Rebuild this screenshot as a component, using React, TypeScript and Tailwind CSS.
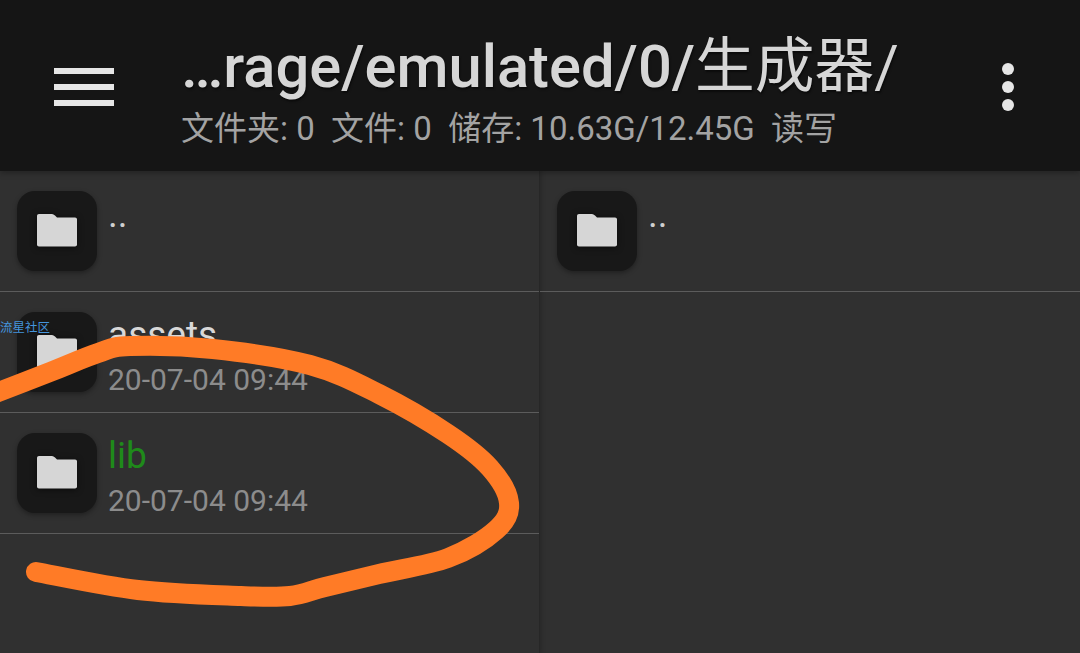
const stroke = [
  [-12, 396], [50, 372], [98, 353], [130, 346], [213, 349], [310, 365], [379, 394], [448, 434], [490, 468],
  [509, 503], [496, 530], [448, 558], [379, 574], [325, 587], [290, 596], [241, 596], [138, 590], [36, 572],
];

function smoothPath(points: number[][]) {
  let d = `M${points[0][0]} ${points[0][1]}`;
  for (let i = 0; i < points.length - 1; i++) {
    const p0 = points[Math.max(0, i - 1)];
    const p1 = points[i];
    const p2 = points[i + 1];
    const p3 = points[Math.min(points.length - 1, i + 2)];
    d += ` C${p1[0] + (p2[0] - p0[0]) / 6} ${p1[1] + (p2[1] - p0[1]) / 6} ${p2[0] - (p3[0] - p1[0]) / 6} ${p2[1] - (p3[1] - p1[1]) / 6} ${p2[0]} ${p2[1]}`;
  }
  return d;
}

function FolderTile() {
  return (
    <div className="flex h-20 w-20 shrink-0 items-center justify-center rounded-[18px] bg-[#181818] shadow-[0_2px_5px_rgba(0,0,0,0.35)]">
      <svg className="drop-shadow-[0_1px_3px_rgba(0,0,0,0.6)]" width="40" height="33" viewBox="0 0 40 33">
        <path
          d="M2 0H15C16 0 17 .5 18 1.500L20 3.500H38C39.200 3.500 40 4.300 40 5.500V30.500C40 31.700 39.200 32.500 38 32.500H2C.8 32.500 0 31.700 0 30.500V2C0 .8.800 0 2 0Z"
          fill="#d6d6d6"
        />
      </svg>
    </div>
  );
}

function Row({ name, date, nameClass }: { name: string; date?: string; nameClass: string }) {
  return (
    <div className="flex h-[121px] items-center gap-[11px] border-b border-[#5c5c5c] pb-px pl-[17px]">
      <FolderTile />
      {date ? (
        <div className="flex flex-col pt-[9px] font-['Roboto',sans-serif]">
          <span className={`text-[37px] leading-[44px] ${nameClass}`}>{name}</span>
          <span className="mt-[4px] text-[30px] leading-[38px] text-[#8c8c8c]">{date}</span>
        </div>
      ) : (
        <span className={`mb-[32px] font-['Roboto',sans-serif] text-[37px] leading-[44px] ${nameClass}`}>{name}</span>
      )}
    </div>
  );
}

export default function App() {
  return (
    <div className="relative flex h-[653px] w-[1080px] flex-col overflow-hidden bg-[#303030]">
      <header className="z-10 flex h-[171px] shrink-0 items-center bg-[#151515] shadow-[0_2px_6px_rgba(0,0,0,0.3)]">
        <div className="ml-[54px] mt-[3px] flex w-[60px] flex-col gap-[10px]">
          <div className="h-[6px] bg-[#e6e6e6]" />
          <div className="h-[6px] bg-[#e6e6e6]" />
          <div className="h-[6px] bg-[#e6e6e6]" />
        </div>
        <div className="ml-[67px] flex w-[821px] flex-col pt-[11px] font-['Roboto','Noto_Sans_CJK_SC',sans-serif]">
          <div className="whitespace-nowrap text-[59.7px] font-medium leading-[68px] text-[#d6d6d6] [text-shadow:1px_2px_2px_rgba(0,0,0,0.5)]">
            …rage/emulated/0/<span className="font-normal">生成器/</span>
          </div>
          <div className="mt-[8px] whitespace-pre text-[33px] leading-[40px] text-[#a3a3a3]">
            文件夹: 0  文件: 0  储存: 10.63G/12.45G  读写
          </div>
        </div>
        <div className="mt-[3px] flex flex-col gap-[6px]">
          <div className="h-3 w-3 rounded-full bg-[#e6e6e6]" />
          <div className="h-3 w-3 rounded-full bg-[#e6e6e6]" />
          <div className="h-3 w-3 rounded-full bg-[#e6e6e6]" />
        </div>
      </header>

      <main className="grid flex-1 grid-cols-2">
        <section className="border-r border-[#272727] shadow-[2px_0_4px_rgba(0,0,0,0.15)]">
          <Row name=".." nameClass="text-[#cfcfcf]" />
          <Row name="assets" date="20-07-04 09:44" nameClass="text-[#d8d8d8]" />
          <Row name="lib" date="20-07-04 09:44" nameClass="text-[#1f8a1a]" />
        </section>
        <section>
          <Row name=".." nameClass="text-[#cfcfcf]" />
        </section>
      </main>

      <span className="absolute left-0 top-[319px] font-['Noto_Sans_CJK_SC',sans-serif] text-[12.500px] leading-[15px] text-[#4595dd]">
        流星社区
      </span>

      <svg className="absolute inset-0" width="1080" height="653" viewBox="0 0 1080 653">
        <path d={smoothPath(stroke)} fill="none" stroke="#ff7b26" strokeWidth="20" strokeLinecap="round" strokeLinejoin="round" />
      </svg>
    </div>
  );
}
